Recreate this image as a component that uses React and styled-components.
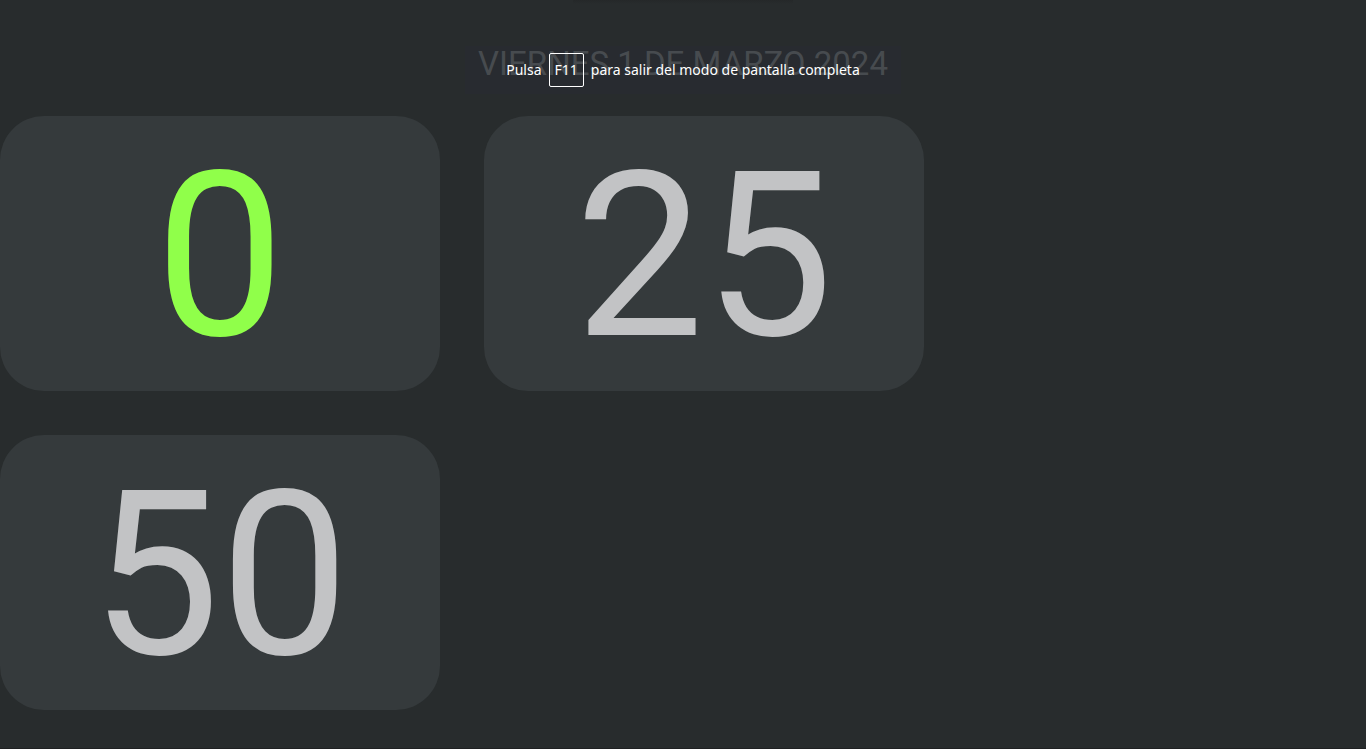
import React from "react";
import styled, { createGlobalStyle } from "styled-components";

const GlobalStyle = createGlobalStyle`
  * { box-sizing: border-box; }
  body {
    margin: 0;
    background: #282c2d;
    font-family: Roboto, "Liberation Sans", sans-serif;
  }
`;

const Page = styled.main`
  position: relative;
  min-height: 100vh;
  padding: 40px 0 38px;
  border-bottom: 1px solid #1f2122;
  overflow: hidden;
`;

const TopShade = styled.div`
  position: absolute;
  top: 0;
  left: 50%;
  width: 220px;
  height: 4px;
  transform: translateX(-50%);
  background: linear-gradient(#252829, #282c2d);
`;

const DateHeading = styled.h1`
  margin: 0 0 28px;
  font-size: 33px;
  font-weight: 400;
  line-height: 48px;
  text-align: center;
  text-transform: uppercase;
  color: #767c7c;
`;

const Counters = styled.ul`
  display: flex;
  flex-wrap: wrap;
  gap: 44px;
  max-width: 1024px;
  margin: 0;
  padding: 0;
  list-style: none;
`;

const Counter = styled.li`
  display: flex;
  align-items: center;
  justify-content: center;
  width: 440px;
  padding: 6px 0 0;
  border-radius: 44px;
  background: #353a3c;
  font-size: 230px;
  line-height: 269px;
  color: ${(p) => (p.$active ? "#90ff4a" : "#c2c3c5")};
`;

const Toast = styled.div`
  position: absolute;
  top: 46px;
  left: 50%;
  transform: translateX(-50%);
  display: flex;
  align-items: center;
  justify-content: center;
  gap: 7px;
  width: 436px;
  height: 48px;
  background: rgba(40, 43, 50, 0.6);
  font-family: "Noto Sans", "Open Sans", sans-serif;
  font-size: 14px;
  line-height: 20px;
  white-space: nowrap;
  color: #fff;
`;

const Key = styled.kbd`
  padding: 6px 5px;
  border: 1px solid #fff;
  border-radius: 2px;
  font: inherit;
`;

const counters = [
  { value: 0, active: true },
  { value: 25, active: false },
  { value: 50, active: false },
];

export default function App() {
  return (
    <>
      <GlobalStyle />
      <Page>
        <TopShade />
        <DateHeading>Viernes 1 de marzo 2024</DateHeading>
        <Counters>
          {counters.map(({ value, active }) => (
            <Counter key={value} $active={active}>
              {value}
            </Counter>
          ))}
        </Counters>
        <Toast role="status">
          <span>Pulsa</span>
          <Key>F11</Key>
          <span>para salir del modo de pantalla completa</span>
        </Toast>
      </Page>
    </>
  );
}
